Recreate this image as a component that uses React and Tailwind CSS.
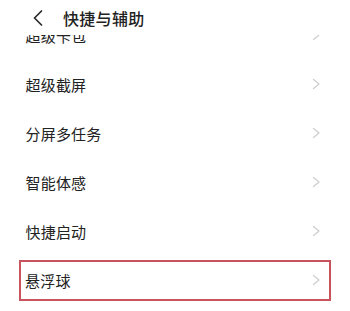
import React from "react";

const Chevron = () => (
  <svg width="9" height="12" viewBox="0 0 9 12" fill="none">
    <path d="M1.5 1.5 L7 6 L1.5 10.5" stroke="#cfcfcf" strokeWidth="1.3" strokeLinecap="round" strokeLinejoin="round" />
  </svg>
);

const items = ["超级卡包", "超级截屏", "分屏多任务", "智能体感", "快捷启动", "悬浮球"];

export default function App() {
  return (
    <div
      className="relative w-[350px] h-[311px] overflow-hidden bg-white text-[#1f1f1f]"
      style={{ fontFamily: '"Noto Sans CJK SC", "Noto Sans", sans-serif' }}
    >
      <div className="relative z-10 flex h-[35px] items-center bg-white pl-[32px]">
        <svg width="12" height="18" viewBox="0 0 12 18" fill="none">
          <path d="M9.5 2 L2.5 9 L9.5 16" stroke="#2a2a2a" strokeWidth="1.7" strokeLinecap="round" strokeLinejoin="round" />
        </svg>
        <span className="ml-[19px] text-[16px] font-medium leading-none tracking-[0.3px] text-[#222]">快捷与辅助</span>
      </div>
      <div className="-mt-[24.5px] flex flex-col">
        {items.map((t, i) => {
          const last = i === items.length - 1;
          return (
            <div key={t} className="flex h-[49px] items-center px-[19px]">
              <div
                className={
                  last
                    ? "flex h-[41px] w-full items-center justify-between border-[2.5px] border-[#c9535c] pl-[4px] pr-[8px]"
                    : "flex h-[41px] w-full items-center justify-between pl-[6.5px] pr-[10.5px]"
                }
              >
                <span className="text-[15px] leading-none tracking-[0.2px] text-[#222]">{t}</span>
                <Chevron />
              </div>
            </div>
          );
        })}
      </div>
    </div>
  );
}
